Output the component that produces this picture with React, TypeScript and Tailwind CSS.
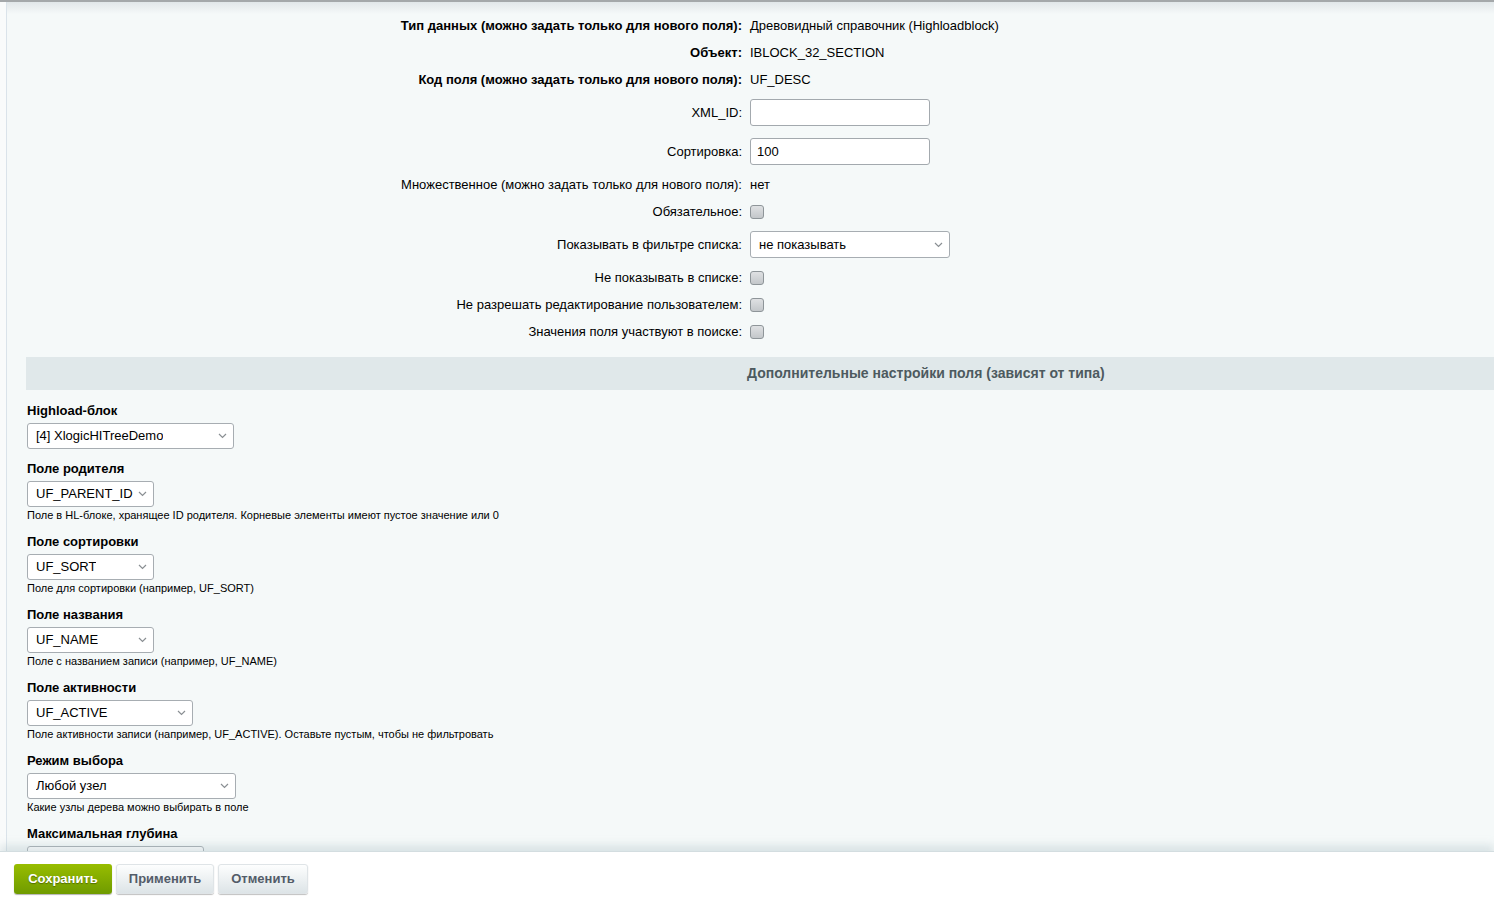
import React from "react";

type Row =
  | { kind: "text"; label: string; value: string; bold?: boolean }
  | { kind: "input"; label: string; value: string }
  | { kind: "check"; label: string }
  | { kind: "select"; label: string; value: string };

const rows: Row[] = [
  { kind: "text", label: "Тип данных (можно задать только для нового поля):", value: "Древовидный справочник (Highloadblock)", bold: true },
  { kind: "text", label: "Объект:", value: "IBLOCK_32_SECTION", bold: true },
  { kind: "text", label: "Код поля (можно задать только для нового поля):", value: "UF_DESC", bold: true },
  { kind: "input", label: "XML_ID:", value: "" },
  { kind: "input", label: "Сортировка:", value: "100" },
  { kind: "text", label: "Множественное (можно задать только для нового поля):", value: "нет" },
  { kind: "check", label: "Обязательное:" },
  { kind: "select", label: "Показывать в фильтре списка:", value: "не показывать" },
  { kind: "check", label: "Не показывать в списке:" },
  { kind: "check", label: "Не разрешать редактирование пользователем:" },
  { kind: "check", label: "Значения поля участвуют в поиске:" },
];

type Group = { label: string; value: string; width: number; hint?: string };

const groups: Group[] = [
  { label: "Highload-блок", value: "[4] XlogicHITreeDemo", width: 207 },
  { label: "Поле родителя", value: "UF_PARENT_ID", width: 127, hint: "Поле в HL-блоке, хранящее ID родителя. Корневые элементы имеют пустое значение или 0" },
  { label: "Поле сортировки", value: "UF_SORT", width: 127, hint: "Поле для сортировки (например, UF_SORT)" },
  { label: "Поле названия", value: "UF_NAME", width: 127, hint: "Поле с названием записи (например, UF_NAME)" },
  { label: "Поле активности", value: "UF_ACTIVE", width: 166, hint: "Поле активности записи (например, UF_ACTIVE). Оставьте пустым, чтобы не фильтровать" },
  { label: "Режим выбора", value: "Любой узел", width: 209, hint: "Какие узлы дерева можно выбирать в поле" },
  { label: "Максимальная глубина", value: "", width: 177 },
];

function Chevron() {
  return (
    <svg width="9" height="6" viewBox="0 0 9 6" className="shrink-0">
      <path d="M1 1l3.5 3.5L8 1" fill="none" stroke="#8a8f93" strokeWidth="1.2" />
    </svg>
  );
}

function FakeSelect({ value, width, height }: { value: string; width: number; height: number }) {
  return (
    <div
      className="flex items-center justify-between bg-white border border-[#a7adb2] rounded-[3px] pl-[8px] pr-[6px] text-[13px] text-black"
      style={{ width, height }}
    >
      <span className="truncate">{value}</span>
      <Chevron />
    </div>
  );
}

function Checkbox() {
  return (
    <span className="block w-[14px] h-[14px] rounded-[3px] border border-[#8e9599] bg-gradient-to-b from-[#dfe1e3] to-[#c3c7ca]" />
  );
}

function FormRow({ row }: { row: Row }) {
  const tall = row.kind === "input" || row.kind === "select";
  return (
    <div className={`flex items-center ${tall ? "h-[39px]" : "h-[27px]"}`}>
      <div
        className={`w-[743px] shrink-0 text-right pr-[8px] ${
          row.kind === "text" && row.bold ? "font-bold" : ""
        }`}
      >
        {row.label}
      </div>
      <div className="flex items-center">
        {row.kind === "text" && <span>{row.value}</span>}
        {row.kind === "input" && (
          <div className="w-[180px] h-[27px] bg-white border border-[#a3a9ae] rounded-[3px] flex items-center px-[6px]">
            {row.value}
          </div>
        )}
        {row.kind === "check" && <Checkbox />}
        {row.kind === "select" && <FakeSelect value={row.value} width={200} height={27} />}
      </div>
    </div>
  );
}

function Button({ children, primary, width }: { children: React.ReactNode; primary?: boolean; width: number }) {
  return (
    <button
      className={
        primary
          ? "h-[30px] rounded-[3px] font-bold text-[13px] text-white bg-gradient-to-b from-[#98bd00] to-[#6f9b00] shadow-[0_1px_1px_rgba(0,0,0,0.3)] [text-shadow:0_1px_1px_rgba(0,0,0,0.35)]"
          : "h-[30px] rounded-[3px] font-bold text-[13px] text-[#535c69] bg-gradient-to-b from-[#fdfefe] to-[#dde4e7] border border-[#dfe4e7] shadow-[0_1px_1px_rgba(0,0,0,0.25)]"
      }
      style={{ width }}
    >
      {children}
    </button>
  );
}

export default function App() {
  return (
    <div className="w-[1494px] h-[899px] overflow-hidden flex flex-col bg-white text-[13px] text-black font-['Liberation_Sans',Arial,sans-serif]">
      <div className="h-[2px] bg-[#a4a8aa] shrink-0" />
      <div className="flex-1 min-h-0 flex">
        <div className="w-[6px] bg-[#f9fbfb] shrink-0" />
        <div className="flex-1 relative overflow-hidden bg-[#f5f9f9] border-l border-[#dae3ea]">
          <div className="absolute inset-x-0 top-0 h-[12px] bg-gradient-to-b from-[#e1e7e9] to-transparent pointer-events-none" />
          <div className="pt-[10px]">
            {rows.map((r, i) => (
              <FormRow key={i} row={r} />
            ))}
          </div>
          <div className="ml-[19px] mt-[12px] h-[33px] bg-[#e0e8ea] flex items-center pl-[721px] font-bold text-[14px] text-[#4d5a5f]">
            Дополнительные настройки поля (зависят от типа)
          </div>
          <div className="pl-[20px] pt-[13px] flex flex-col gap-[12px]">
            {groups.map((g, i) => (
              <div key={i} className="flex flex-col">
                <div className="font-bold leading-[16px] mb-[4px]">{g.label}</div>
                <FakeSelect value={g.value} width={g.width} height={26} />
                {g.hint && <div className="text-[11px] leading-[14px] mt-[1px]">{g.hint}</div>}
              </div>
            ))}
          </div>
        </div>
      </div>
      <div className="h-[48px] shrink-0 bg-white relative shadow-[0_-6px_8px_rgba(170,190,195,0.35)] border-t border-[#d3dde0] flex items-start pt-[12px] pl-[14px] gap-[4px]">
        <Button primary width={98}>Сохранить</Button>
        <Button width={98}>Применить</Button>
        <Button width={90}>Отменить</Button>
      </div>
    </div>
  );
}
